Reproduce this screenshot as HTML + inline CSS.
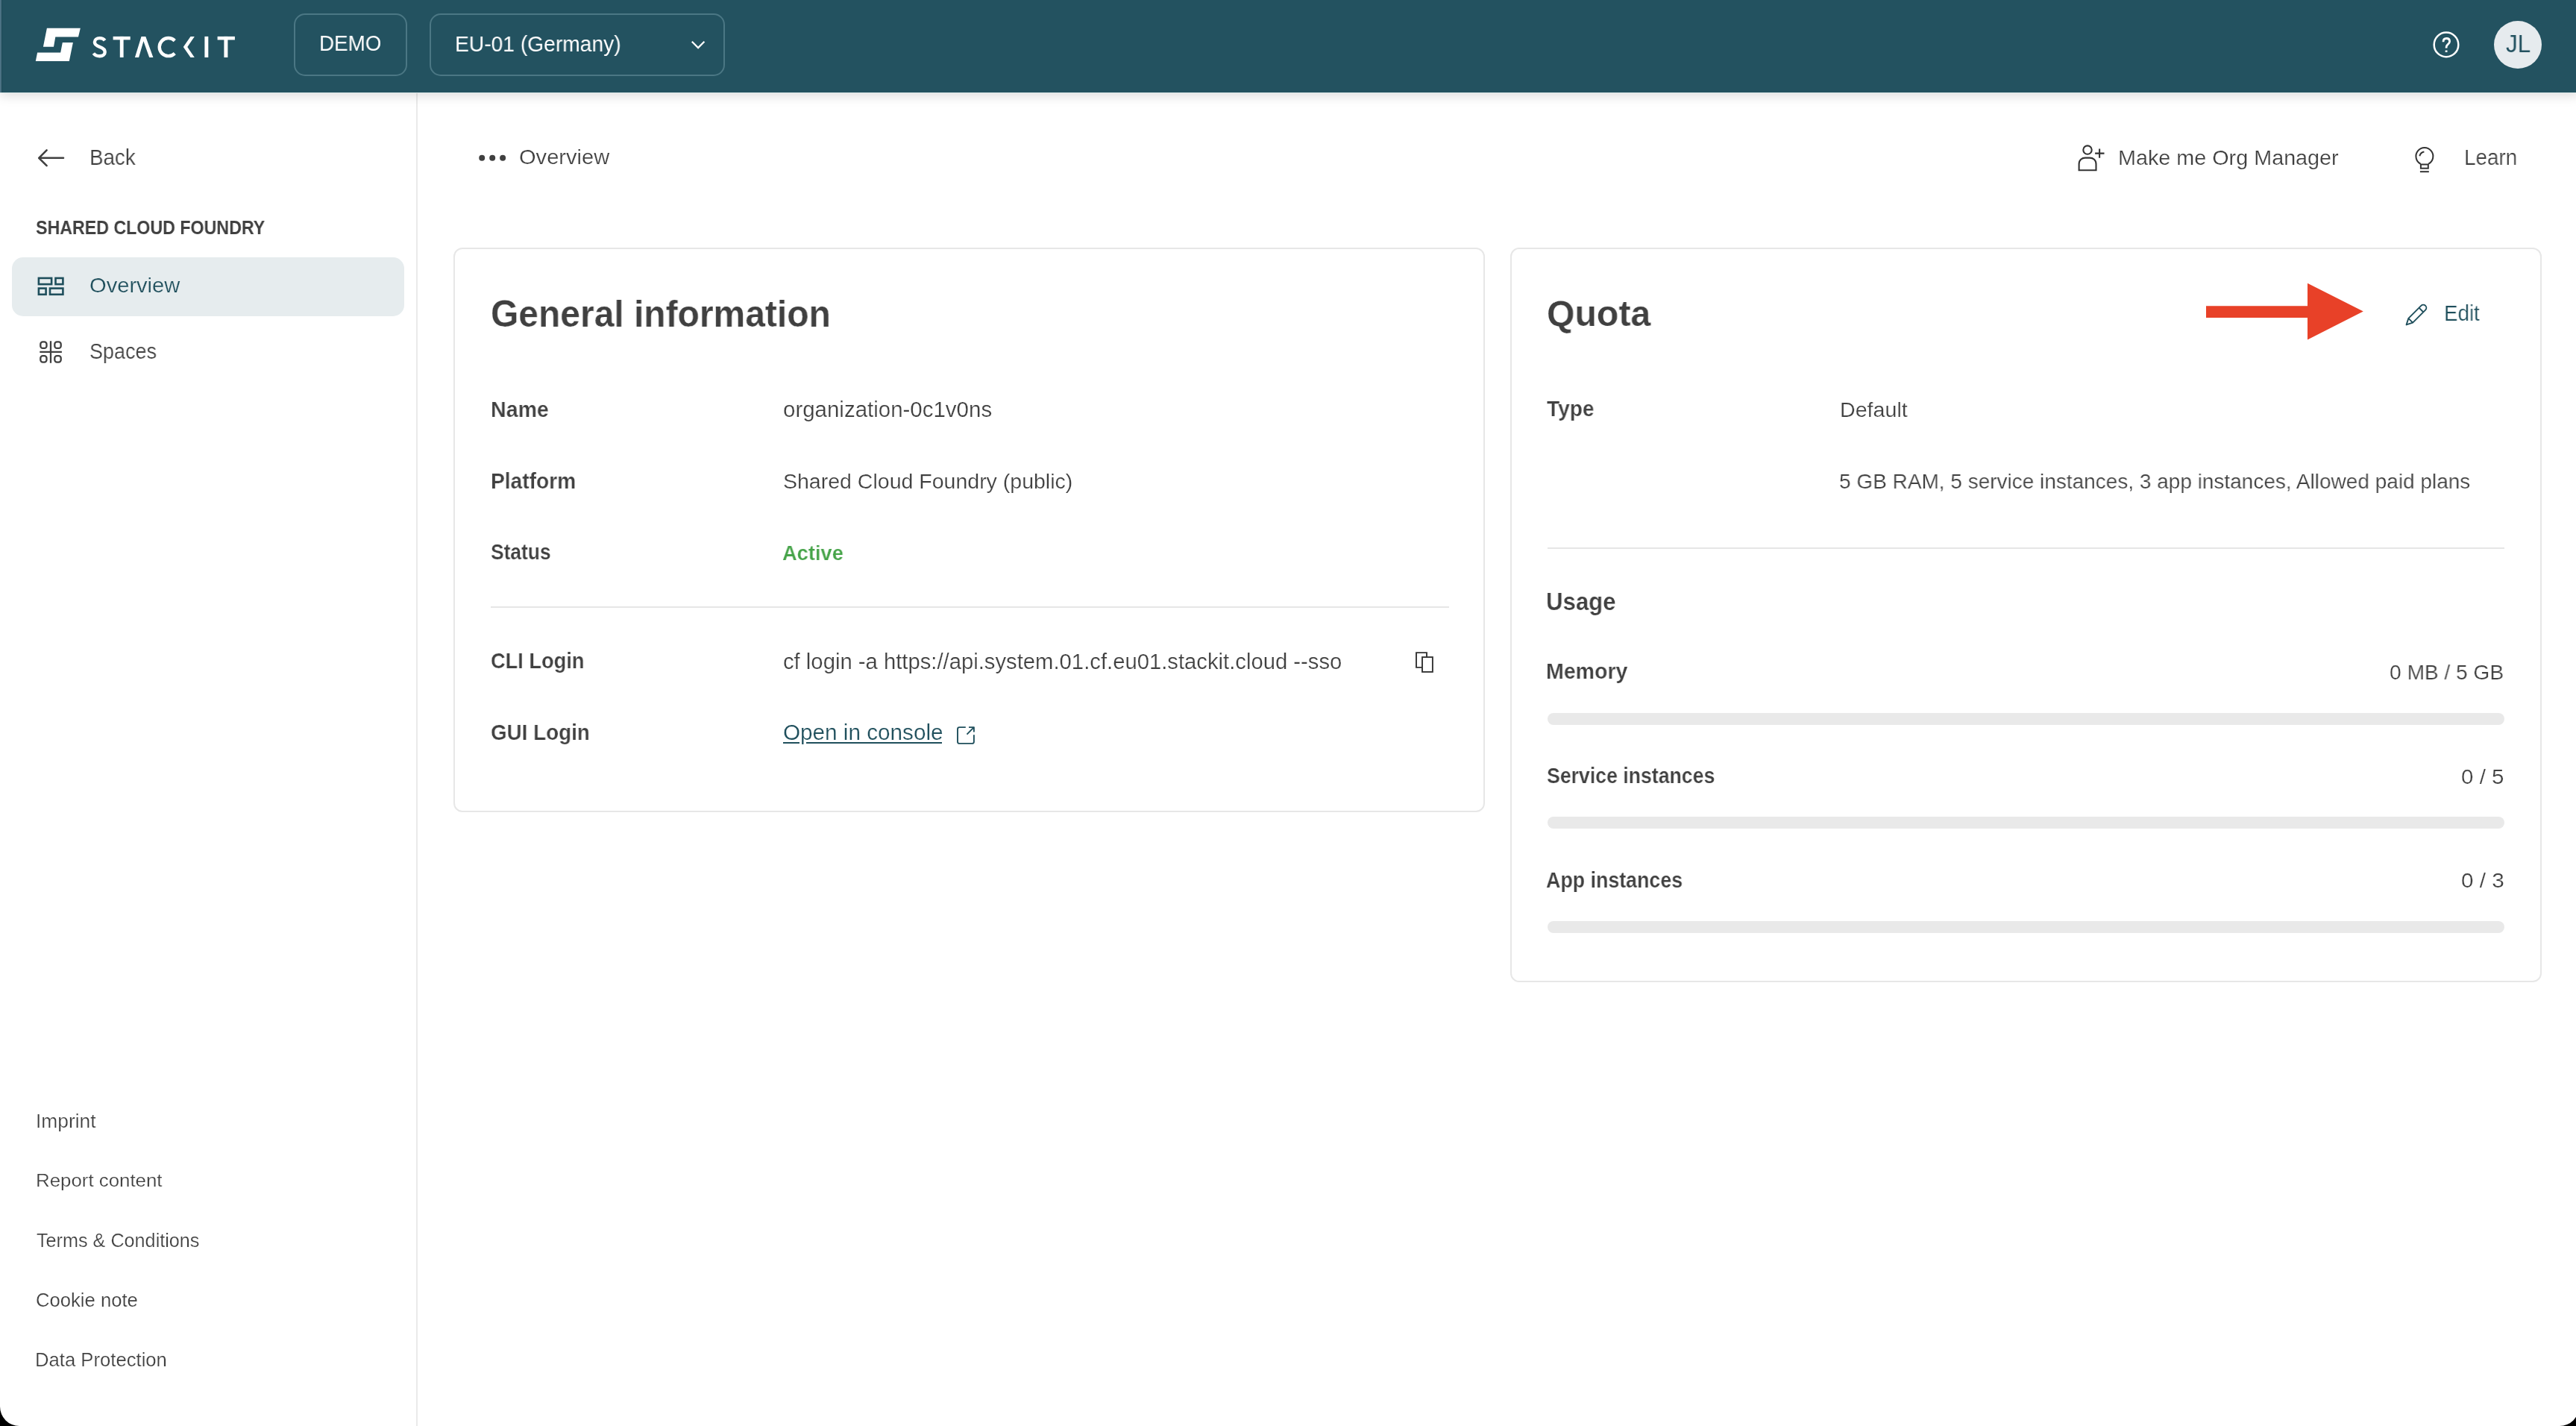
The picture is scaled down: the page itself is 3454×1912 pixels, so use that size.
<!DOCTYPE html>
<html><head><meta charset="utf-8">
<style>
html,body{margin:0;padding:0;background:#000;}
body{width:3454px;height:1912px;position:relative;overflow:hidden;font-family:"Liberation Sans",sans-serif;}
#win{position:absolute;left:0;top:0;width:3458px;height:1912px;background:#fff;border-radius:0 0 26px 26px;overflow:hidden;}
.t{position:absolute;white-space:nowrap;transform-origin:0 0;will-change:transform;}
#hdr{position:absolute;left:0;top:0;width:3458px;height:124px;background:#235260;box-shadow:0 5px 14px rgba(0,0,0,0.13);z-index:1;}
#edge{position:absolute;left:0;top:0;width:2px;height:124px;background:#4b7283;border-right:1px solid #1e4957;z-index:2;}
#hline{position:absolute;left:0;top:124px;width:3454px;height:1px;background:#dde8e8;z-index:2;}
.btn{position:absolute;border:2px solid #4b7784;border-radius:15px;box-sizing:border-box;}
#side{position:absolute;left:558px;top:124px;width:2px;height:1788px;background:#eaeaea;}
#hl{position:absolute;left:16px;top:344.5px;width:525.5px;height:79px;background:#e6ecee;border-radius:15px;}
.card{position:absolute;border:2px solid #e7e7e7;border-radius:12px;box-sizing:border-box;background:#fff;}
.hr{position:absolute;height:2px;background:#e6e6e6;}
.bar{position:absolute;height:16px;background:#e9e9e9;border-radius:8px;}
#avatar{position:absolute;left:3344px;top:28px;width:64px;height:64px;border-radius:50%;background:#e6ebee;}
#top .ul{position:absolute;top:994.8px;height:2.2px;background:#1f4f5c;}
#top{position:absolute;left:0;top:0;width:3454px;height:1912px;z-index:3;}
</style></head><body>
<div id="win">
<div id="side"></div>
<div id="hl"></div>
<div class="card" style="left:608px;top:332px;width:1383px;height:757px;"></div>
<div class="card" style="left:2024.5px;top:331.5px;width:1383px;height:985px;"></div>
<div class="hr" style="left:658px;top:813px;width:1284.5px;"></div>
<div class="hr" style="left:2075px;top:734px;width:1282.5px;"></div>
<div class="bar" style="left:2075px;top:956px;width:1282.5px;"></div>
<div class="bar" style="left:2075px;top:1095px;width:1282.5px;"></div>
<div class="bar" style="left:2075px;top:1234.5px;width:1282.5px;"></div>
<div id="hdr"></div>
<div id="edge"></div>
<div id="hline"></div>
<div id="top">
<div class="btn" style="left:394px;top:18px;width:152px;height:84px;"></div>
<div class="btn" style="left:576px;top:18px;width:396px;height:84px;"></div>
<div id="avatar"></div>
<div class="ul" style="left:1050.2px;width:21.8px;"></div><div class="ul" style="left:1081.3px;width:181.7px;"></div>

<svg width="3454" height="1912" viewBox="0 0 3454 1912" style="position:absolute;left:0;top:0">
 <!-- logo mark -->
 <g fill="#fff">
  <polygon points="62.9,37.8 107.8,37.8 105,49.6 74.3,49.6 72,62.8 57.9,62.8"/>
  <polygon points="83.8,56.9 97.9,56.9 92.8,82 47.8,82 50.1,70.4 81.2,70.4"/>
  <!-- STACKIT letters -->
  <rect x="151.6" y="48.9" width="23.1" height="4.5"/>
  <rect x="160.8" y="48.9" width="4.8" height="28.1"/>
  <polygon points="180.9,77 189.5,48.9 195.3,48.9 205.4,77 200.2,77 192.4,55.2 186.1,77"/>
  <polygon points="255.5,48.9 260.8,48.9 251.3,63.1 260.8,77 255.5,77 245.8,63.1"/>
  <rect x="274.4" y="48.9" width="4.9" height="28.1"/>
  <rect x="291.6" y="48.9" width="23.3" height="4.6"/>
  <rect x="300.4" y="48.9" width="5" height="28.1"/>
 </g>
 <g fill="none" stroke="#fff" stroke-width="4.4">
  <path d="M140.6,54.2 C139,52 136.5,51.1 133.6,51.1 C129.6,51.1 126.9,53.3 126.9,56.5 C126.9,60 130,61.6 133.6,62.8 C137.6,64.2 140.7,66.1 140.7,69.8 C140.7,73.3 137.8,75.3 133.6,75.3 C130.1,75.3 127.2,73.8 125.4,71.5"/>
  <path d="M234.3,54.6 A12.05,12.05 0 1 0 234.3,71.6"/>
 </g>
 <!-- chevron -->
 <polyline points="927.8,55.8 936.1,64.1 944.4,55.8" fill="none" stroke="#fff" stroke-width="2.3" stroke-linecap="butt" stroke-linejoin="miter"/>
 <!-- help icon -->
 <circle cx="3280" cy="59.9" r="16.3" fill="none" stroke="#fff" stroke-width="2.5"/>
 <path d="M3276,56.2 C3276,52.8 3277.9,51.5 3280.3,51.5 C3283,51.5 3284.6,53.2 3284.6,55.4 C3284.6,57.5 3283.2,58.6 3281.9,59.8 C3280.5,61.1 3280.1,62 3280.1,63.5 L3280.1,64.6" fill="none" stroke="#fff" stroke-width="2.8"/>
 <rect x="3278.7" y="67.5" width="2.8" height="2.5" fill="#fff"/>
 <!-- back arrow -->
 <g fill="none" stroke="#404040" stroke-width="2.6" stroke-linecap="round" stroke-linejoin="round">
  <path d="M85,211.8 L52.6,211.8 M62.6,201.4 L52.2,211.8 L62.6,222.2"/>
 </g>
 <!-- overview icon -->
 <g fill="none" stroke="#1f4f5c" stroke-width="2.6">
  <rect x="51.9" y="372.9" width="17.2" height="8.2"/>
  <rect x="74.5" y="372.9" width="9.9" height="8.2"/>
  <rect x="51.9" y="386.6" width="9.7" height="8.2"/>
  <rect x="67" y="386.6" width="17.4" height="8.2"/>
 </g>
 <!-- spaces icon -->
 <g fill="none" stroke="#404040" stroke-width="2.3">
  <rect x="54.3" y="458.4" width="8.2" height="8.5" rx="3"/>
  <rect x="73.3" y="458.4" width="8.4" height="8.5" rx="3"/>
  <rect x="54.3" y="477.1" width="8.2" height="8.5" rx="3"/>
  <rect x="73.3" y="477.1" width="8.4" height="8.5" rx="3"/>
  <path d="M68,457.2 L68,486.7 M53.3,471.8 L82.9,471.8"/>
 </g>
 <!-- dots -->
 <g fill="#404040">
  <circle cx="646.2" cy="211.7" r="4"/><circle cx="660.2" cy="211.7" r="4"/><circle cx="674.1" cy="211.7" r="4"/>
 </g>
 <!-- user plus -->
 <g fill="none" stroke="#333" stroke-width="2.1">
  <circle cx="2799" cy="201.1" r="5.7"/>
  <path d="M2787.6,228.3 L2787.6,220 C2787.6,214.5 2791.5,211.6 2796,211.6 L2802,211.6 C2806.5,211.6 2810.5,214.5 2810.5,220 L2810.5,228.3 Z"/>
  <path d="M2815.1,199.5 L2815.1,211.8 M2809.1,205.6 L2821.5,205.6"/>
 </g>
 <!-- lightbulb -->
 <g fill="none" stroke="#333" stroke-width="2">
  <path d="M3245.8,219.8 A11.5,11.5 0 1 1 3256.0,219.8"/>
  <rect x="3245.9" y="220.5" width="9.9" height="5.2"/>
  <path d="M3244.9,230.2 L3256.8,230.2"/>
  <path d="M3244.3,209.2 C3245,206.5 3247.3,204.2 3250.4,203.6"/>
 </g>
 <!-- copy icon -->
 <g fill="none" stroke="#333" stroke-width="1.9">
  <path d="M1907,894.9 L1899,894.9 L1899,875.1 L1913,875.1 L1913,881.1"/>
  <rect x="1907" y="881.1" width="13.9" height="19.8"/>
 </g>
 <!-- external link icon -->
 <g fill="none" stroke="#1f4f5c" stroke-width="1.9" stroke-linejoin="round">
  <path d="M1294.8,975.1 L1286.5,975.1 Q1284,975.1 1284,977.6 L1284,994.4 Q1284,996.9 1286.5,996.9 L1303.4,996.9 Q1305.9,996.9 1305.9,994.4 L1305.9,985.2"/>
  <path d="M1299,975.1 L1305.9,975.1 L1305.9,981.4 M1305.9,975.1 L1296.5,984.6"/>
 </g>
 <!-- pencil -->
 <g transform="translate(3226.6,435.4) rotate(-45)" fill="none" stroke="#1f4f5c" stroke-width="1.9" stroke-linejoin="round">
  <path d="M0,0 L8,-4.1 L32,-4.1 A4.1,4.1 0 0 1 32,4.1 L8,4.1 Z M8,-4.1 L8,4.1 M28,-4.1 L28,4.1"/>
 </g>
 <!-- red arrow -->
 <polygon points="2958,410.2 3094,410.2 3094,379.7 3168.8,417.6 3094,455.4 3094,425.9 2958,425.9" fill="#e84128"/>
</svg>

<div id="demo" class="t" style="left:428.00px;top:44.43px;font-size:28.78px;line-height:28.78px;font-weight:400;color:#fff;letter-spacing:0.000px;transform:scaleX(0.9649);">DEMO</div>
<div id="eu" class="t" style="left:609.80px;top:44.51px;font-size:28.92px;line-height:28.92px;font-weight:400;color:#fff;letter-spacing:0.000px;transform:scaleX(0.9760);">EU-01 (Germany)</div>
<div id="jl" class="t" style="left:3359.80px;top:43.03px;font-size:32.56px;line-height:32.56px;font-weight:400;color:#235260;letter-spacing:0.000px;transform:scaleX(0.9655);">JL</div>
<div id="back" class="t" style="-webkit-text-stroke:0.22px #fff;left:120.00px;top:196.51px;font-size:28.92px;line-height:28.92px;font-weight:400;color:#404040;letter-spacing:0.000px;transform:scaleX(0.9607);">Back</div>
<div id="scf" class="t" style="left:47.80px;top:292.83px;font-size:25.00px;line-height:25.00px;font-weight:700;color:#404040;letter-spacing:0.000px;transform:scaleX(0.9282);">SHARED CLOUD FOUNDRY</div>
<div id="ov" class="t" style="-webkit-text-stroke:0.22px #e6ecee;left:120.40px;top:369.19px;font-size:27.76px;line-height:27.76px;font-weight:400;color:#1f4f5c;letter-spacing:0.000px;transform:scaleX(1.0488);">Overview</div>
<div id="sp" class="t" style="-webkit-text-stroke:0.22px #fff;left:120.40px;top:456.56px;font-size:28.63px;line-height:28.63px;font-weight:400;color:#404040;letter-spacing:0.000px;transform:scaleX(0.9423);">Spaces</div>
<div id="f1" class="t" style="-webkit-text-stroke:0.22px #fff;left:47.60px;top:1491.06px;font-size:24.86px;line-height:24.86px;font-weight:400;color:#404040;letter-spacing:0.000px;transform:scaleX(1.0595);">Imprint</div>
<div id="f2" class="t" style="-webkit-text-stroke:0.22px #fff;left:47.60px;top:1571.08px;font-size:24.71px;line-height:24.71px;font-weight:400;color:#404040;letter-spacing:0.000px;transform:scaleX(1.0463);">Report content</div>
<div id="f3" class="t" style="-webkit-text-stroke:0.22px #fff;left:49.20px;top:1651.06px;font-size:24.86px;line-height:24.86px;font-weight:400;color:#404040;letter-spacing:0.000px;transform:scaleX(1.0136);">Terms &amp; Conditions</div>
<div id="f4" class="t" style="-webkit-text-stroke:0.22px #fff;left:48.20px;top:1731.06px;font-size:24.86px;line-height:24.86px;font-weight:400;color:#404040;letter-spacing:0.000px;transform:scaleX(1.0312);">Cookie note</div>
<div id="f5" class="t" style="-webkit-text-stroke:0.22px #fff;left:47.20px;top:1811.06px;font-size:24.86px;line-height:24.86px;font-weight:400;color:#404040;letter-spacing:0.000px;transform:scaleX(1.0323);">Data Protection</div>
<div id="bc" class="t" style="-webkit-text-stroke:0.22px #fff;left:696.40px;top:197.19px;font-size:27.76px;line-height:27.76px;font-weight:400;color:#404040;letter-spacing:0.000px;transform:scaleX(1.0481);">Overview</div>
<div id="mom" class="t" style="-webkit-text-stroke:0.22px #fff;left:2840.00px;top:196.68px;font-size:28.49px;line-height:28.49px;font-weight:400;color:#404040;letter-spacing:0.000px;transform:scaleX(1.0096);">Make me Org Manager</div>
<div id="learn" class="t" style="-webkit-text-stroke:0.22px #fff;left:3303.60px;top:196.53px;font-size:28.78px;line-height:28.78px;font-weight:400;color:#404040;letter-spacing:0.000px;transform:scaleX(0.9676);">Learn</div>
<div id="gi" class="t" style="-webkit-text-stroke:0.22px #fff;left:657.80px;top:396.18px;font-size:49.27px;line-height:49.27px;font-weight:700;color:#404040;letter-spacing:0.000px;transform:scaleX(0.9737);">General information</div>
<div id="name" class="t" style="-webkit-text-stroke:0.22px #fff;left:657.80px;top:534.19px;font-size:29.65px;line-height:29.65px;font-weight:700;color:#404040;letter-spacing:0.000px;transform:scaleX(0.9628);">Name</div>
<div id="orgv" class="t" style="-webkit-text-stroke:0.22px #fff;left:1050.00px;top:534.63px;font-size:28.78px;line-height:28.78px;font-weight:400;color:#404040;letter-spacing:0.000px;transform:scaleX(1.0244);">organization-0c1v0ns</div>
<div id="plat" class="t" style="-webkit-text-stroke:0.22px #fff;left:658.00px;top:630.76px;font-size:28.63px;line-height:28.63px;font-weight:700;color:#404040;letter-spacing:0.000px;transform:scaleX(0.9826);">Platform</div>
<div id="platv" class="t" style="-webkit-text-stroke:0.22px #fff;left:1050.00px;top:630.90px;font-size:28.34px;line-height:28.34px;font-weight:400;color:#404040;letter-spacing:0.000px;transform:scaleX(1.0065);">Shared Cloud Foundry (public)</div>
<div id="stat" class="t" style="-webkit-text-stroke:0.22px #fff;left:658.00px;top:726.39px;font-size:29.07px;line-height:29.07px;font-weight:700;color:#404040;letter-spacing:0.000px;transform:scaleX(0.9061);">Status</div>
<div id="statv" class="t" style="-webkit-text-stroke:0.22px #fff;left:1049.40px;top:726.78px;font-size:28.49px;line-height:28.49px;font-weight:700;color:#45a348;letter-spacing:0.000px;transform:scaleX(0.9558);">Active</div>
<div id="cli" class="t" style="-webkit-text-stroke:0.22px #fff;left:658.00px;top:872.19px;font-size:29.07px;line-height:29.07px;font-weight:700;color:#404040;letter-spacing:0.000px;transform:scaleX(0.9352);">CLI Login</div>
<div id="cliv" class="t" style="-webkit-text-stroke:0.22px #fff;left:1049.80px;top:872.76px;font-size:28.63px;line-height:28.63px;font-weight:400;color:#404040;letter-spacing:0.000px;transform:scaleX(1.0217);">cf login -a https://api.system.01.cf.eu01.stackit.cloud --sso</div>
<div id="gui" class="t" style="-webkit-text-stroke:0.22px #fff;left:658.00px;top:968.49px;font-size:29.07px;line-height:29.07px;font-weight:700;color:#404040;letter-spacing:0.000px;transform:scaleX(0.9568);">GUI Login</div>
<div id="guiv" class="t" style="-webkit-text-stroke:0.22px #fff;left:1050.00px;top:968.43px;font-size:28.78px;line-height:28.78px;font-weight:400;color:#1f4f5c;letter-spacing:0.000px;transform:scaleX(1.0320);">Open in console</div>
<div id="quota" class="t" style="-webkit-text-stroke:0.22px #fff;left:2074.00px;top:396.25px;font-size:48.84px;line-height:48.84px;font-weight:700;color:#404040;letter-spacing:0.000px;transform:scaleX(0.9864);">Quota</div>
<div id="edit" class="t" style="-webkit-text-stroke:0.22px #fff;left:3277.20px;top:406.43px;font-size:28.78px;line-height:28.78px;font-weight:400;color:#1f4f5c;letter-spacing:0.000px;transform:scaleX(0.9633);">Edit</div>
<div id="type" class="t" style="-webkit-text-stroke:0.22px #fff;left:2074.00px;top:534.43px;font-size:28.78px;line-height:28.78px;font-weight:700;color:#404040;letter-spacing:0.000px;transform:scaleX(0.9765);">Type</div>
<div id="typev" class="t" style="-webkit-text-stroke:0.22px #fff;left:2467.00px;top:534.68px;font-size:28.49px;line-height:28.49px;font-weight:400;color:#404040;letter-spacing:0.000px;transform:scaleX(1.0052);">Default</div>
<div id="qv" class="t" style="-webkit-text-stroke:0.22px #fff;left:2466.00px;top:630.68px;font-size:28.49px;line-height:28.49px;font-weight:400;color:#404040;letter-spacing:0.000px;transform:scaleX(0.9825);">5 GB RAM, 5 service instances, 3 app instances, Allowed paid plans</div>
<div id="usage" class="t" style="-webkit-text-stroke:0.22px #fff;left:2073.00px;top:790.47px;font-size:33.58px;line-height:33.58px;font-weight:700;color:#404040;letter-spacing:0.000px;transform:scaleX(0.9284);">Usage</div>
<div id="mem" class="t" style="-webkit-text-stroke:0.22px #fff;left:2073.00px;top:886.39px;font-size:29.07px;line-height:29.07px;font-weight:700;color:#404040;letter-spacing:0.000px;transform:scaleX(0.9817);">Memory</div>
<div id="memv" class="t" style="-webkit-text-stroke:0.22px #fff;left:3204.00px;top:887.00px;font-size:28.34px;line-height:28.34px;font-weight:400;color:#404040;letter-spacing:0.000px;transform:scaleX(0.9919);">0 MB / 5 GB</div>
<div id="si" class="t" style="-webkit-text-stroke:0.22px #fff;left:2074.00px;top:1026.39px;font-size:29.07px;line-height:29.07px;font-weight:700;color:#404040;letter-spacing:0.000px;transform:scaleX(0.9173);">Service instances</div>
<div id="siv" class="t" style="-webkit-text-stroke:0.22px #fff;left:3299.80px;top:1026.80px;font-size:28.34px;line-height:28.34px;font-weight:400;color:#404040;letter-spacing:0.000px;transform:scaleX(1.0424);">0 / 5</div>
<div id="ai" class="t" style="-webkit-text-stroke:0.22px #fff;left:2073.40px;top:1165.71px;font-size:28.92px;line-height:28.92px;font-weight:700;color:#404040;letter-spacing:0.000px;transform:scaleX(0.9266);">App instances</div>
<div id="aiv" class="t" style="-webkit-text-stroke:0.22px #fff;left:3299.80px;top:1165.78px;font-size:28.49px;line-height:28.49px;font-weight:400;color:#404040;letter-spacing:0.000px;transform:scaleX(1.0424);">0 / 3</div>
</div>
</div>
</body></html>
